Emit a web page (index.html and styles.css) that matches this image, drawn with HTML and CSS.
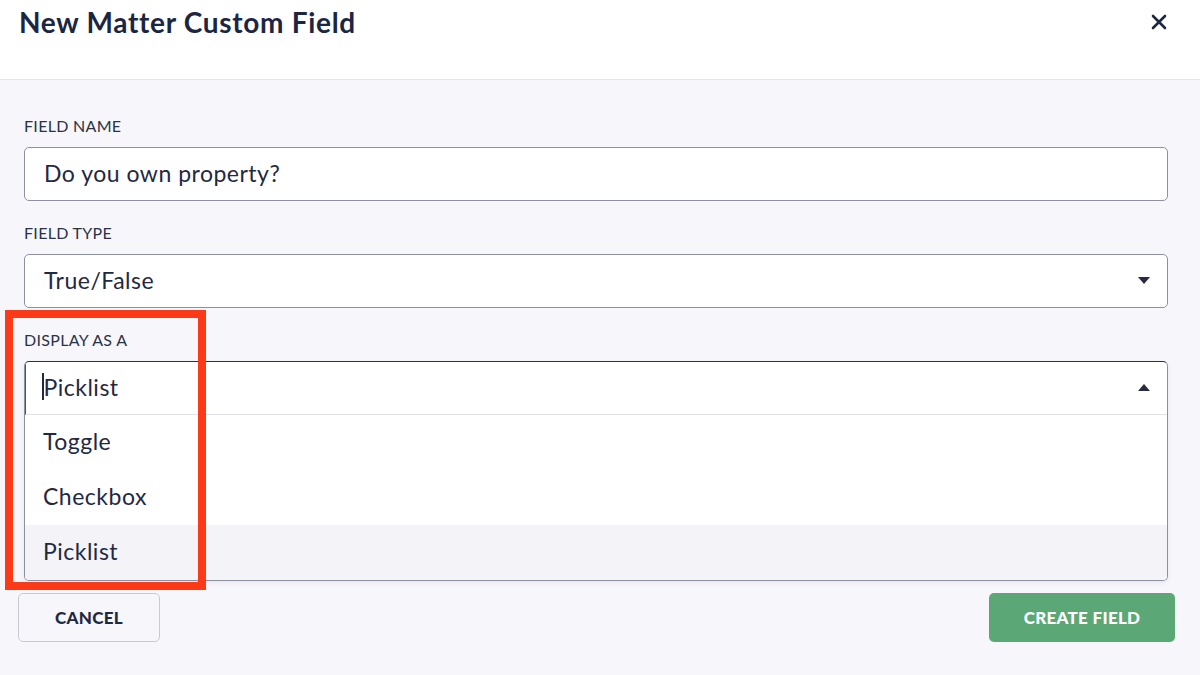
FILE: index.html
```html
<!DOCTYPE html>
<html lang="en">
<head>
<meta charset="utf-8">
<title>New Matter Custom Field</title>
<link rel="stylesheet" href="styles.css">
</head>
<body>
<div class="modal">
  <header class="modal-header">
    <h1 class="modal-title">New Matter Custom Field</h1>
    <button class="close-btn" aria-label="Close">
      <svg width="16" height="16" viewBox="0 0 16 16"><path d="M2 2 L14 14 M14 2 L2 14" stroke="#1b2642" stroke-width="2.6" stroke-linecap="round"/></svg>
    </button>
  </header>
  <main class="modal-body">
    <div class="field">
      <label class="field-label">FIELD NAME</label>
      <div class="input">Do you own property?</div>
    </div>
    <div class="field">
      <label class="field-label">FIELD TYPE</label>
      <div class="input select">
        <span>True/False</span>
        <svg class="caret" width="12" height="8" viewBox="0 0 12 8"><path d="M0 0 H12 L6 7 Z" fill="#262b3f"/></svg>
      </div>
    </div>
    <div class="field last">
      <label class="field-label">DISPLAY AS A</label>
      <div class="combo">
        <div class="combo-input">
          <span class="value"><span class="cursor"></span>Picklist</span>
          <svg class="caret" width="12" height="8" viewBox="0 0 12 8"><path d="M0 7 H12 L6 0 Z" fill="#262b3f"/></svg>
        </div>
        <ul class="options">
          <li class="option">Toggle</li>
          <li class="option">Checkbox</li>
          <li class="option active">Picklist</li>
        </ul>
      </div>
      <div class="highlight-box"></div>
    </div>
  </main>
  <footer class="modal-footer">
    <button class="btn btn-cancel">CANCEL</button>
    <button class="btn btn-create">CREATE FIELD</button>
  </footer>
</div>
</body>
</html>
```
FILE: styles.css
```css
* { box-sizing: border-box; }
html, body { margin: 0; padding: 0; }
body {
  width: 1200px;
  height: 675px;
  overflow: hidden;
  background: #f7f7fb;
  font-family: Lato, "Noto Sans", sans-serif;
  color: #1f2942;
}
.modal { width: 1200px; height: 675px; display: flex; flex-direction: column; }
.modal-header {
  height: 80px;
  background: #ffffff;
  border-bottom: 1px solid #e6e6ee;
  display: flex;
  align-items: flex-start;
  justify-content: space-between;
  padding: 5px 33px 0 19px;
}
.modal-title {
  margin: 0;
  font-size: 28px;
  font-weight: 700;
  letter-spacing: 0.7px;
  color: #1b2642;
  line-height: 34px;
}
.close-btn {
  border: none;
  background: none;
  padding: 0;
  margin-top: 9px;
  width: 16px;
  height: 16px;
  display: flex;
}
.modal-body {
  padding: 36px 32px 0 24px;
  display: flex;
  flex-direction: column;
}
.field { display: flex; flex-direction: column; margin-bottom: 22px; position: relative; }
.field.last { margin-bottom: 0; }
.field-label {
  font-size: 16px;
  line-height: 20px;
  color: #2b3246;
  letter-spacing: 0.3px;
  margin-bottom: 11px;
}
.input {
  height: 54px;
  background: #ffffff;
  border: 1px solid #8d90a3;
  border-radius: 5px;
  padding: 0 19px 2px;
  font-size: 23px;
  letter-spacing: 0.5px;
  display: flex;
  align-items: center;
  color: #1f2942;
}
.select { justify-content: space-between; padding-right: 17px; }
.select .caret { margin-top: 2px; }
.combo {
  background: #ffffff;
  border: 1px solid #8d90a3;
  border-top-color: #263252;
  border-radius: 5px;
  box-shadow: 0 2px 4px rgba(40, 40, 80, 0.08);
  overflow: hidden;
}
.combo-input {
  height: 53px;
  border-bottom: 1px solid #e2e1e8;
  display: flex;
  align-items: center;
  justify-content: space-between;
  padding: 0 17px 3px 16px;
  font-size: 23px;
  letter-spacing: 0.5px;
  border-left: 1px solid #4a536c;
}
.combo-input .caret { margin-top: 3px; }
.combo-input .value { display: flex; align-items: center; }
.cursor {
  display: inline-block;
  width: 1.5px;
  height: 27px;
  background: #1f2942;
  margin-right: 0;
}
.options { list-style: none; margin: 0; padding: 0; }
.option {
  height: 55px;
  display: flex;
  align-items: center;
  padding: 0 18px 3px;
  font-size: 23px;
  letter-spacing: 0.5px;
}
.option.active { background: #f4f4f8; }
.highlight-box {
  position: absolute;
  left: -19px;
  top: -20px;
  width: 201px;
  height: 280px;
  border: 8px solid #fd3a17;
  pointer-events: none;
}
.modal-footer {
  display: flex;
  justify-content: space-between;
  padding: 12px 25px 0 18px;
}
.btn {
  height: 49px;
  border-radius: 5px;
  font-family: Lato, "Noto Sans", sans-serif;
  font-weight: 900;
  font-size: 17px;
  letter-spacing: 0.3px;
}
.btn-cancel {
  width: 142px;
  background: #f7f7fb;
  border: 1px solid #c9c9d2;
  color: #1f2942;
}
.btn-create {
  width: 186px;
  background: #5ba876;
  border: none;
  color: #ffffff;
}
```
